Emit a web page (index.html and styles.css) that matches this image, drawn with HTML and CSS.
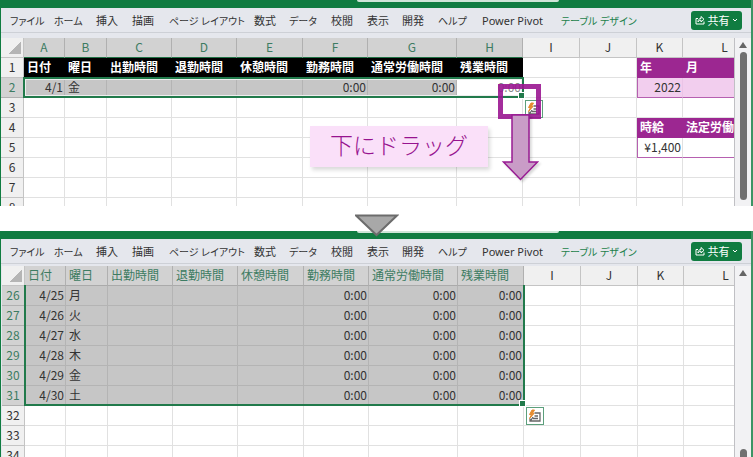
FILE: index.html
```
<!DOCTYPE html>
<html lang="ja">
<head>
  <meta charset="UTF-8" />
  <meta name="viewport" content="width=device-width, initial-scale=1.0"/>
  <title>勤務表 - オートフィル</title>
  <link rel="stylesheet" href="styles.css">
</head>
<body>

  <!-- before -->
  <section class="window before">
    <div class="titlebar"><div class="search"></div></div>
    <div class="ribbon">
      <nav class="tabs">
        <a href="#" class="kana">ファイル</a>
        <a href="#" class="kana">ホーム</a>
        <a href="#">挿入</a>
        <a href="#">描画</a>
        <a href="#" class="kana">ページ レイアウト</a>
        <a href="#">数式</a>
        <a href="#" class="kana">データ</a>
        <a href="#">校閲</a>
        <a href="#">表示</a>
        <a href="#">開発</a>
        <a href="#" class="kana">ヘルプ</a>
        <a href="#">Power Pivot</a>
        <a href="#" class="kana active">テーブル デザイン</a>
      </nav>
      <button type="button" class="share">
        <svg width="10" height="10" viewBox="0 0 10 10" fill="none" stroke="#fff"><path d="M3 3.5H1v5.500h8V6.500M3 7C3 4.500 4.500 3.500 6 3.500V1.500L9 4.300 6 7V5.200C4.800 5.200 3.800 5.700 3 7z"/></svg>
        <span>共有</span>
        <svg width="6" height="4" viewBox="0 0 6 4" fill="none" stroke="#fff"><path d="M1 1l2 2 2-2"/></svg>
      </button>
    </div>

    <div class="work">
      <div class="sheet">
        <table>
          <colgroup>
            <col class="c-head"><col class="c-a"><col class="c-b"><col class="c-m"><col class="c-m"><col class="c-e"><col class="c-m"><col class="c-g"><col class="c-e"><col class="c-i"><col class="c-i"><col class="c-k"><col class="c-l">
          </colgroup>
          <thead>
            <tr><th class="corner"></th><th class="sel">A</th><th class="sel">B</th><th class="sel">C</th><th class="sel">D</th><th class="sel">E</th><th class="sel">F</th><th class="sel">G</th><th class="sel">H</th><th>I</th><th>J</th><th>K</th><th>L</th></tr>
          </thead>
          <tbody>
            <tr><th>1</th><td class="black">日付</td><td class="black">曜日</td><td class="black">出勤時間</td><td class="black">退勤時間</td><td class="black">休憩時間</td><td class="black">勤務時間</td><td class="black">通常労働時間</td><td class="black">残業時間</td><td></td><td></td><td class="purple">年</td><td class="purple">月</td></tr>
            <tr class="picked"><th class="sel">2</th><td class="num">4/1</td><td>金</td><td></td><td></td><td></td><td class="num">0:00</td><td class="num">0:00</td><td class="num current">0:00</td><td class="plain"></td><td class="plain"></td><td class="num pink first">2022</td><td class="pink"></td></tr>
            <tr><th>3</th><td></td><td></td><td></td><td></td><td></td><td></td><td></td><td></td><td></td><td></td><td></td><td></td></tr>
            <tr><th>4</th><td></td><td></td><td></td><td></td><td></td><td></td><td></td><td></td><td></td><td></td><td class="purple">時給</td><td class="purple">法定労働</td></tr>
            <tr><th>5</th><td></td><td></td><td></td><td></td><td></td><td></td><td></td><td></td><td></td><td></td><td class="num wage first">¥1,400</td><td class="wage"></td></tr>
            <tr><th>6</th><td></td><td></td><td></td><td></td><td></td><td></td><td></td><td></td><td></td><td></td><td></td><td></td></tr>
            <tr><th>7</th><td></td><td></td><td></td><td></td><td></td><td></td><td></td><td></td><td></td><td></td><td></td><td></td></tr>
            <tr><th>8</th><td></td><td></td><td></td><td></td><td></td><td></td><td></td><td></td><td></td><td></td><td></td><td></td></tr>
          </tbody>
        </table>
        <div class="selection"></div>
        <div class="quick">
          <svg width="14" height="14" viewBox="0 0 14 14" fill="none"><path d="M6.500 4H12v8H2V9.500M5 9.500h5M6.500 7H10M2.500 12l2.500-4" stroke="#666" stroke-width="1.300"/><path d="M4 1L1.500 5.500h2L1.500 9.500l4.500-5H4.500L6.500 1z" fill="#e58b2e" stroke="#e58b2e"/></svg>
        </div>
        <div class="note">下にドラッグ</div>
        <div class="frame"></div>
        <svg class="arrow" width="38" height="68" viewBox="0 0 38 68"><path d="M11 1h17v47h8.500L19.500 65.500 2.500 48H11z" fill="#c99cc7" stroke="#981b93" stroke-width="1.500"/></svg>
      </div>
      <div class="scroll"><i class="up"></i><i class="thumb"></i></div>
    </div>
  </section>

  <div class="next">
    <svg width="44" height="23" viewBox="0 0 44 23"><path d="M1 1.500h41L21.500 21z" fill="#a8a8a8" stroke="#6c6c6c" stroke-width="2"/></svg>
  </div>

  <!-- after -->
  <section class="window after">
    <div class="titlebar"><div class="search"></div></div>
    <div class="ribbon">
      <nav class="tabs">
        <a href="#" class="kana">ファイル</a>
        <a href="#" class="kana">ホーム</a>
        <a href="#">挿入</a>
        <a href="#">描画</a>
        <a href="#" class="kana">ページ レイアウト</a>
        <a href="#">数式</a>
        <a href="#" class="kana">データ</a>
        <a href="#">校閲</a>
        <a href="#">表示</a>
        <a href="#">開発</a>
        <a href="#" class="kana">ヘルプ</a>
        <a href="#">Power Pivot</a>
        <a href="#" class="kana active">テーブル デザイン</a>
      </nav>
      <button type="button" class="share">
        <svg width="10" height="10" viewBox="0 0 10 10" fill="none" stroke="#fff"><path d="M3 3.500H1v5.500h8V6.500M3 7C3 4.500 4.500 3.500 6 3.500V1.500L9 4.300 6 7V5.200C4.800 5.200 3.800 5.700 3 7z"/></svg>
        <span>共有</span>
        <svg width="6" height="4" viewBox="0 0 6 4" fill="none" stroke="#fff"><path d="M1 1l2 2 2-2"/></svg>
      </button>
    </div>

    <div class="work">
      <div class="sheet">
        <table>
          <colgroup>
            <col class="c-head"><col class="c-a"><col class="c-b"><col class="c-m"><col class="c-m"><col class="c-e"><col class="c-m"><col class="c-g"><col class="c-e"><col class="c-i"><col class="c-i"><col class="c-k"><col class="c-l">
          </colgroup>
          <thead>
            <tr><th class="corner"></th><th class="sel name">日付</th><th class="sel name">曜日</th><th class="sel name">出勤時間</th><th class="sel name">退勤時間</th><th class="sel name">休憩時間</th><th class="sel name">勤務時間</th><th class="sel name">通常労働時間</th><th class="sel name">残業時間</th><th>I</th><th>J</th><th>K</th><th>L</th></tr>
          </thead>
          <tbody>
            <tr class="picked"><th class="sel">26</th><td class="num">4/25</td><td>月</td><td></td><td></td><td></td><td class="num">0:00</td><td class="num">0:00</td><td class="num">0:00</td><td class="plain"></td><td class="plain"></td><td class="plain"></td><td class="plain"></td></tr>
            <tr class="picked"><th class="sel">27</th><td class="num">4/26</td><td>火</td><td></td><td></td><td></td><td class="num">0:00</td><td class="num">0:00</td><td class="num">0:00</td><td class="plain"></td><td class="plain"></td><td class="plain"></td><td class="plain"></td></tr>
            <tr class="picked"><th class="sel">28</th><td class="num">4/27</td><td>水</td><td></td><td></td><td></td><td class="num">0:00</td><td class="num">0:00</td><td class="num">0:00</td><td class="plain"></td><td class="plain"></td><td class="plain"></td><td class="plain"></td></tr>
            <tr class="picked"><th class="sel">29</th><td class="num">4/28</td><td>木</td><td></td><td></td><td></td><td class="num">0:00</td><td class="num">0:00</td><td class="num">0:00</td><td class="plain"></td><td class="plain"></td><td class="plain"></td><td class="plain"></td></tr>
            <tr class="picked"><th class="sel">30</th><td class="num">4/29</td><td>金</td><td></td><td></td><td></td><td class="num">0:00</td><td class="num">0:00</td><td class="num">0:00</td><td class="plain"></td><td class="plain"></td><td class="plain"></td><td class="plain"></td></tr>
            <tr class="picked"><th class="sel">31</th><td class="num">4/30</td><td>土</td><td></td><td></td><td></td><td class="num">0:00</td><td class="num">0:00</td><td class="num">0:00</td><td class="plain"></td><td class="plain"></td><td class="plain"></td><td class="plain"></td></tr>
            <tr><th>32</th><td></td><td></td><td></td><td></td><td></td><td></td><td></td><td></td><td></td><td></td><td></td><td></td></tr>
            <tr><th>33</th><td></td><td></td><td></td><td></td><td></td><td></td><td></td><td></td><td></td><td></td><td></td><td></td></tr>
            <tr><th>34</th><td></td><td></td><td></td><td></td><td></td><td></td><td></td><td></td><td></td><td></td><td></td><td></td></tr>
          </tbody>
        </table>
        <div class="selection"></div>
        <div class="quick">
          <svg width="14" height="14" viewBox="0 0 14 14" fill="none"><path d="M6.500 4H12v8H2V9.500M5 9.500h5M6.500 7H10M2.500 12l2.500-4" stroke="#666" stroke-width="1.300"/><path d="M4 1L1.500 5.500h2L1.500 9.500l4.500-5H4.500L6.500 1z" fill="#e58b2e" stroke="#e58b2e"/></svg>
        </div>
      </div>
      <div class="scroll"><i class="up"></i><i class="thumb"></i></div>
    </div>
  </section>

</body>
</html>
```
FILE: styles.css
```
* {
  box-sizing: border-box;
}

body {
  margin: 0;
  height: 100vh;
  display: flex;
  flex-direction: column;
  overflow: hidden;
  background: #fff;
  color: #333;
  font-family: "Noto Sans CJK JP", sans-serif;
  font-size: 12px;
}

.window {
  display: flex;
  flex-direction: column;
  border-left: 1px solid #107c41;
  border-right: 2px solid #3c9465;
  background: #e5e7ed;
}

.after {
  flex: 1;
  min-height: 0;
}

/* title bar and ribbon */
.titlebar {
  flex: none;
  height: 8px;
  background: #107c41;
}

.search {
  width: 202px;
  height: 2px;
  margin: 0 auto;
  position: relative;
  left: 82px;
  border-radius: 0 0 2px 2px;
  background: #cfe5d8;
}

.ribbon {
  flex: none;
  display: flex;
  align-items: center;
  justify-content: space-between;
  height: 25px;
  padding: 0 9px;
  border-bottom: 1px solid #cdd0d6;
}

.tabs {
  display: grid;
  grid-template-columns: 44px 42px 36px 37px 85px 35px 42px 36px 35px 36px 44px 79px auto;
  padding-top: 2px;
  font-family: "Noto Sans", "Noto Sans CJK JP", sans-serif;
  font-size: 11px;
  line-height: 16px;
  font-feature-settings: "palt";
  white-space: nowrap;
}

.tabs a {
  color: #333;
  text-decoration: none;
}

.tabs .kana {
  font-size: 10px;
}

.tabs .active {
  color: #1b7f4a;
}

.share {
  display: flex;
  align-items: center;
  justify-content: space-between;
  width: 51px;
  height: 19px;
  padding: 0 4px;
  border: none;
  border-radius: 3px;
  background: #107c41;
  color: #fff;
  font-family: inherit;
  font-size: 11px;
  line-height: 16px;
  cursor: pointer;
}

/* sheet */
.work {
  display: flex;
  flex: 1;
  min-height: 0;
  margin-top: 5px;
}

.before .work {
  flex: none;
  max-height: 168px;
}

.after .work {
  margin-top: 2px;
  padding-left: 1px;
}

.sheet {
  position: relative;
  flex: 1;
  min-width: 0;
  overflow: hidden;
  background: #fff;
}

table {
  width: 766px;
  table-layout: fixed;
  border-collapse: separate;
  border-spacing: 0;
}

.c-head { width: 23px; }
.c-a { width: 41px; }
.c-b { width: 42px; }
.c-m { width: 65px; }
.c-e { width: 66px; }
.c-g { width: 89px; }
.c-i { width: 57px; }
.c-k { width: 46px; }
.c-l { width: 84px; }

th,
td {
  height: 20px;
  padding: 0 2px 2px 3px;
  border-right: 1px solid #e1e1e1;
  border-bottom: 1px solid #e1e1e1;
  line-height: 17px;
  text-align: left;
  white-space: nowrap;
  overflow: hidden;
}

th {
  padding: 0 0 2px;
  background: #f0f0f0;
  border-color: #c4c4c4;
  font-weight: normal;
  text-align: center;
}

.after thead th {
  height: 19px;
}

th.sel {
  background: #d2d2d2;
  border-color: #b0b0b0;
  color: #3d7c62;
}

th.name {
  padding-left: 3px;
  text-align: left;
}

thead th.sel {
  border-bottom-color: #217346;
}

.after thead th.sel {
  border-bottom-color: #aaa;
}

.corner {
  background: linear-gradient(135deg, transparent 50%, #b5b5b5 50%) 7px 3px / 13px 13px no-repeat #f0f0f0;
}

.num {
  padding: 0 1px 2px;
  text-align: right;
}

.picked td {
  background: #c6c6c6;
  border-color: #b4b4b4;
}

.picked .plain {
  background: #fff;
  border-color: #e1e1e1;
}

.picked .current {
  background: #fff;
  color: #888;
}

.black {
  background: #000;
  border-color: #000;
  color: #fff;
  font-weight: bold;
}

.purple {
  background: #9c2791;
  border-color: #9c2791;
  color: #fff;
  font-weight: bold;
}

.picked .pink {
  background: #f2ceee;
  border-right-color: #ebc4e7;
  border-bottom-color: #b660b0;
}

.wage {
  border-bottom-color: #b660b0;
}

.first,
.picked .first {
  border-left: 1px solid #b660b0;
}

/* selection outline with its fill handle */
.selection {
  position: absolute;
  top: 39px;
  left: 22px;
  width: 501px;
  height: 21px;
  border: 2px solid #217a4b;
  box-shadow: inset 0 0 0 1px #eee;
}

.after .selection {
  top: -2px;
  height: 142px;
  box-shadow: none;
  clip-path: inset(21px -4px -4px 0);
}

.selection::after {
  content: "";
  position: absolute;
  right: -3px;
  bottom: -3px;
  width: 5px;
  height: 5px;
  border: 1px solid #fff;
  box-sizing: content-box;
  background: #217a4b;
}

.quick {
  position: absolute;
  top: 62px;
  left: 524px;
  width: 18px;
  height: 18px;
  padding: 1px;
  border: 1px solid #5c9f7c;
  background: #fff;
}

.quick svg {
  display: block;
}

.after .quick {
  top: 141px;
}

.scroll {
  display: flex;
  flex-direction: column;
  align-items: center;
  width: 17px;
  padding-top: 4px;
  border-left: 1px solid #c0c0c4;
  background: #f2f2f4;
}

.up {
  border: 4px solid transparent;
  border-top: none;
  border-bottom: 6px solid #666;
}

.thumb {
  width: 7px;
  height: 148px;
  margin-top: 4px;
  border-radius: 4px;
  background: #707070;
}

.after .thumb {
  flex: none;
  margin-top: 173px;
}

/* callouts */
.note {
  position: absolute;
  top: 88px;
  left: 309px;
  width: 178px;
  height: 41px;
  background: #fae0f9;
  box-shadow: 2px 3px 4px rgba(0, 0, 0, 0.15);
  color: #97138f;
  font-size: 23px;
  font-weight: 300;
  line-height: 36px;
  text-align: center;
}

.frame {
  position: absolute;
  top: 46px;
  left: 497px;
  width: 43px;
  height: 35px;
  border: 5px solid rgba(154, 22, 145, 0.9);
}

.arrow {
  position: absolute;
  top: 76px;
  left: 500px;
  filter: drop-shadow(2px 2px 1px rgba(0, 0, 0, 0.15));
}

.next {
  flex: none;
  position: relative;
  z-index: 1;
  height: 25px;
  padding-top: 8px;
  text-align: center;
}
```
